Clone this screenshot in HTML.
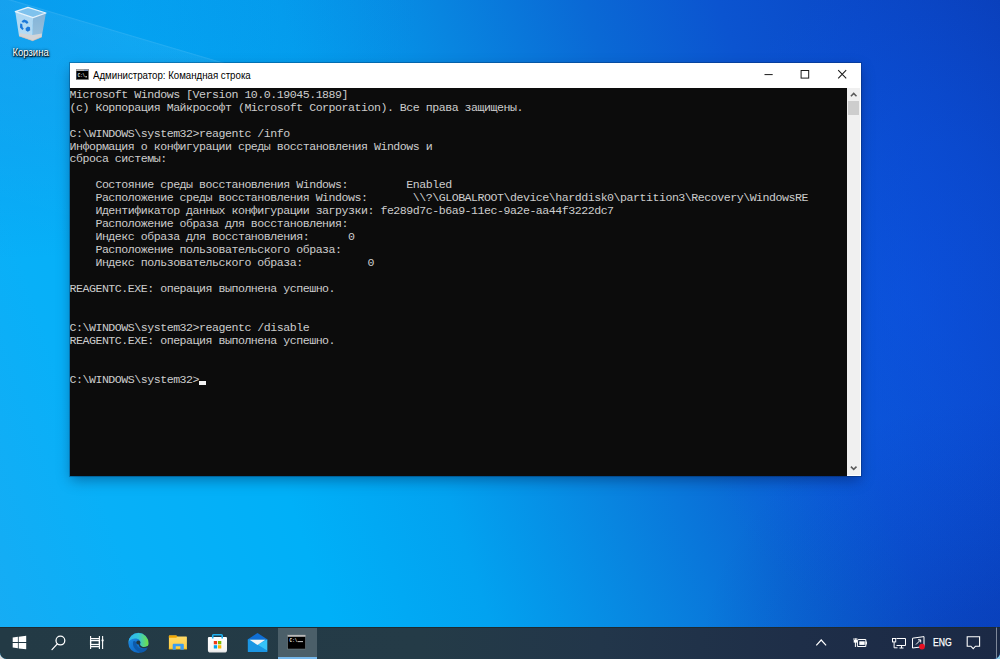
<!DOCTYPE html>
<html lang="ru">
<head>
<meta charset="utf-8">
<title>Администратор: Командная строка</title>
<style>
*{box-sizing:border-box;margin:0;padding:0}
html,body{width:1000px;height:659px;overflow:hidden;background:linear-gradient(to right,#dedede 0,#dedede 50%,#8fd0e6 50%,#8fd0e6 100%)}
body{position:relative;font-family:"Liberation Sans",sans-serif}
#desk{position:absolute;left:0;top:0;width:1000px;height:659px;overflow:hidden;border-radius:0 0 6.5px 6.5px;
 background:
  linear-gradient(71deg,#17acf4 0%,#08b0f8 13%,#00b0f8 28%,#02a2f0 41%,#0885e0 54%,#0a69d5 66%,#0b54d0 77%,#0a49c8 88%,#0a40bc 100%);}
#desk .v1{position:absolute;left:0;top:0;width:1000px;height:659px;
 background:
  radial-gradient(ellipse 420px 260px at 0 0,rgba(20,110,215,.30) 0%,rgba(20,110,215,.16) 55%,rgba(20,110,215,0) 100%),
  radial-gradient(ellipse 230px 330px at 905px 300px,rgba(12,86,240,.42) 0%,rgba(12,86,240,.25) 50%,rgba(12,86,240,0) 100%),
  radial-gradient(ellipse 300px 260px at 1000px 659px,rgba(5,30,150,.32) 0%,rgba(5,30,150,0) 100%)}
#beam{position:absolute;left:-30px;top:-13.3px;width:460px;height:220px;transform-origin:0 0;transform:rotate(16.5deg);
 background:linear-gradient(to bottom,rgba(255,255,255,0) 0,rgba(255,255,255,.12) 1px,rgba(255,255,255,.05) 2.2px,rgba(255,255,255,.03) 70px,rgba(255,255,255,0) 220px)}
/* desktop icon */
#bin{position:absolute;left:10px;top:4px;width:42px;height:40px}
#binlbl{position:absolute;left:1px;top:46px;width:60px;text-align:center;color:#fff;font-size:10.3px;line-height:13px;
 text-shadow:0 1px 2px rgba(0,0,0,.9),0 0 3px rgba(0,0,0,.7),1px 1px 1px rgba(0,0,0,.8)}
#binlbl span{display:inline-block;transform:scaleX(.92);transform-origin:50% 50%}
/* window */
#win{position:absolute;left:69.5px;top:63px;width:791.5px;height:412.5px;background:#fff;
 box-shadow:0 0 0 1px rgba(0,30,70,.30),0 5px 13px -1px rgba(0,0,40,.36)}
#tb{position:absolute;left:0;top:0;width:791.5px;height:24.5px;background:#fff}
#ticon{position:absolute;left:7.5px;top:7px;width:12px;height:10px}
#ttl{position:absolute;left:23.5px;top:4.1px;font-size:10.8px;line-height:16px;color:#000;white-space:nowrap;transform:scaleX(.896);transform-origin:0 50%}
.wb{position:absolute;top:0;height:24px;width:37px}
#con{position:absolute;left:0;top:24.5px;width:777.5px;height:388px;background:#0c0c0c;overflow:hidden}
#con pre{position:absolute;left:0px;top:1.2px;font-family:"Liberation Mono",monospace;font-size:11.6px;line-height:12.95px;letter-spacing:-0.48px;color:#cccccc;white-space:pre}
#cur{position:absolute;left:129.5px;top:293.9px;width:7px;height:3.3px;background:#f2f2f2}
#sb{position:absolute;left:777.5px;top:24.5px;width:14px;height:388px;background:#f0f0f0;border-right:1.8px solid #fff;border-bottom:.8px solid #fff}
#thumb{position:absolute;left:1px;top:13.5px;width:11px;height:13.5px;background:#cdcdcd}
/* taskbar */
#task{position:absolute;left:0;top:627px;width:1000px;height:32px;
 background:linear-gradient(to right,#233a45 0%,#243b47 42%,#22364a 60%,#1e2e48 80%,#1b2945 100%);
 border-top:1px solid #1d2a30}
#active{position:absolute;left:278px;top:0;width:38.5px;height:31px;background:#4b5f69}
#active i{position:absolute;left:0;bottom:0;width:100%;height:2px;background:#76b9ed}
#eng{position:absolute;left:933px;top:8px;font-size:10.4px;line-height:14px;color:#fff;-webkit-text-stroke:.25px #fff;transform:scaleX(.83);transform-origin:0 50%}
svg{position:absolute;overflow:visible}
</style>
</head>
<body>
<div id="desk">
 <div class="v1"></div>
 <div id="beam"></div>
<svg id="binsvg" style="left:0;top:0" width="62" height="46" viewBox="0 0 62 46">
  <defs>
   <linearGradient id="bl" x1="0" y1="0" x2="0" y2="1"><stop offset="0" stop-color="#a9d6f4"/><stop offset="1" stop-color="#b9dcf2"/></linearGradient>
   <linearGradient id="br" x1="0" y1="0" x2="0" y2="1"><stop offset="0" stop-color="#82b3d8"/><stop offset="1" stop-color="#9cc2dc"/></linearGradient>
  </defs>
  <polygon points="15.3,11.7 28,7.3 45.9,13 33,17.7" fill="#7fc2ed"/>
  <polygon points="15.3,11.7 33,17.7 32.7,40.7 19,36" fill="url(#bl)"/>
  <polygon points="33,17.7 45.9,13 41.7,37 32.7,40.7" fill="url(#br)"/>
  <polygon points="19,36 20.2,33.2 32.8,35 41.9,33.6 41.7,37 32.7,40.7" fill="#d1d5d9"/>
  <polyline points="19,36 32.7,40.7 41.7,37" fill="none" stroke="#dcb69c" stroke-width="0.55"/>
  <polygon points="15.3,11.7 28,7.3 45.9,13 33,17.7" fill="none" stroke="#e6f3fc" stroke-width="1.3" stroke-linejoin="round"/>
  <g fill="#1b78da">
   <path d="M21.5 21.2 l2.6 -1.6 3.2 1.2 1.2 2.2 -2 .8 -1.6 -1.6 -2 .6z"/>
   <path d="M20.2 23.4 l2 .6 .4 3.2 1.2 1.6 -1.4 1.2 -2.4 -2.6z"/>
   <path d="M25.6 28.2 l2.2 -1.6 2.2 .6 .2 3 -2.4 1.6 -2 -1.2z"/>
  </g>
 </svg>
 <div id="binlbl"><span>Корзина</span></div>

 <div id="win">
  <div id="tb">
   <svg style="left:6.8px;top:6.3px" width="12.6" height="10.6" viewBox="0 0 12.6 10.6">
    <rect x="0" y="0" width="12.6" height="10.6" fill="#000"/>
    <rect x="0" y="0" width="12.6" height="2" fill="#b4b4b4"/>
    <rect x="8" y=".6" width="4" height=".9" fill="#4a76c8"/>
    <rect x=".25" y=".25" width="12.1" height="10.1" fill="none" stroke="#8c8c8c" stroke-width=".5"/>
    <text x="1.7" y="8" font-family="Liberation Mono, monospace" font-size="5.4" font-weight="700" fill="#e6e6e6" textLength="7.4" lengthAdjust="spacingAndGlyphs">C:\</text>
    <rect x="9.4" y="7.2" width="1.5" height="1.2" fill="#e6e6e6"/>
   </svg>
   <svg style="left:-0.5px;top:0" width="792" height="24" viewBox="0 0 792 24">
    <path d="M695.5 11.6 H703.7" stroke="#1a1a1a" stroke-width="1"/>
    <rect x="732.1" y="7.5" width="7.6" height="7.6" fill="none" stroke="#1a1a1a" stroke-width="1"/>
    <path d="M769.2 7.2 L777.2 15.3 M777.2 7.2 L769.2 15.3" stroke="#1a1a1a" stroke-width="1.05"/>
   </svg>
   <div id="ttl">Администратор: Командная строка</div>
  </div>
  <div id="con"><pre>Microsoft Windows [Version 10.0.19045.1889]
(c) Корпорация Майкрософт (Microsoft Corporation). Все права защищены.

C:\WINDOWS\system32&gt;reagentc /info
Информация о конфигурации среды восстановления Windows и
сброса системы:

    Состояние среды восстановления Windows:         Enabled
    Расположение среды восстановления Windows:       \\?\GLOBALROOT\device\harddisk0\partition3\Recovery\WindowsRE
    Идентификатор данных конфигурации загрузки: fe289d7c-b6a9-11ec-9a2e-aa44f3222dc7
    Расположение образа для восстановления:
    Индекс образа для восстановления:      0
    Расположение пользовательского образа:
    Индекс пользовательского образа:          0

REAGENTC.EXE: операция выполнена успешно.


C:\WINDOWS\system32&gt;reagentc /disable
REAGENTC.EXE: операция выполнена успешно.


C:\WINDOWS\system32&gt;</pre><div id="cur"></div></div>
  <div id="sb"><div id="thumb"></div>
   <svg style="left:0;top:0" width="14" height="388" viewBox="0 0 14 388">
    <path d="M3.9 8.2 L6.7 5.4 L9.5 8.2" fill="none" stroke="#5a5a5a" stroke-width="1.5"/>
    <path d="M3.9 378.6 L6.7 381.4 L9.5 378.6" fill="none" stroke="#5a5a5a" stroke-width="1.5"/>
   </svg></div>
 </div>

 <div id="task">
  <div id="active"><i></i></div>
  <div id="eng">ENG</div>
 </div>
 <svg id="tbicons" style="left:0;top:0" width="1000" height="659" viewBox="0 0 1000 659">
  <defs>
   <linearGradient id="eb" x1="0" y1="0" x2="1" y2="1"><stop offset="0" stop-color="#2193e6"/><stop offset=".55" stop-color="#1272cf"/><stop offset="1" stop-color="#0c56a6"/></linearGradient>
   <linearGradient id="eg" x1="0" y1="0" x2="1" y2="0"><stop offset="0" stop-color="#2fb5ef"/><stop offset=".5" stop-color="#35c6d8"/><stop offset="1" stop-color="#72e23f"/></linearGradient>
   <linearGradient id="fy" x1="0" y1="0" x2="0" y2="1"><stop offset="0" stop-color="#ffdb6a"/><stop offset="1" stop-color="#ffcd42"/></linearGradient>
   <linearGradient id="bag" x1="0" y1="0" x2="0" y2="1"><stop offset="0" stop-color="#ffffff"/><stop offset=".8" stop-color="#f6f6f6"/><stop offset="1" stop-color="#e2e2e2"/></linearGradient>
  </defs>
  <!-- start -->
  <g fill="#fff">
   <polygon points="12.7,637.5 17.9,636.8 17.9,642 12.7,642"/>
   <polygon points="18.7,636.7 26.2,635.7 26.2,642 18.7,642"/>
   <polygon points="12.7,642.9 17.9,642.9 17.9,648.3 12.7,647.6"/>
   <polygon points="18.7,642.9 26.2,642.9 26.2,649.3 18.7,648.4"/>
  </g>
  <!-- search -->
  <g fill="none" stroke="#fff" stroke-width="1.25">
   <circle cx="60.4" cy="640.6" r="4.4"/>
   <path d="M52 649.6 L57.3 643.9" stroke-linecap="round"/>
  </g>
  <!-- task view -->
  <g fill="none" stroke="#fff" stroke-width="1.1">
   <path d="M90.6 636 V649 M99.4 636 V649 M90.6 638.6 H99.4 M90.6 646.6 H99.4"/>
   <rect x="90.6" y="640.6" width="8.8" height="3.9" stroke-width="1.3"/>
   <path d="M102.6 636 V649"/>
   <circle cx="102.6" cy="640.4" r="1.1" fill="#fff" stroke="none"/>
  </g>
  <!-- edge -->
  <g transform="translate(138.4 642.9)">
   <circle r="10.1" fill="url(#eb)"/>
   <path d="M-5.2 -1.5 C-6.5 3 -3 8.6 3.2 9.6 C6 9 8 7.5 9.2 5 C4 7.5 -1.5 5 -2 0.5 C-2.3 -1.5 -3.5 -2.5 -5.2 -1.5Z" fill="#0d5aaa"/>
   <path d="M-10.1 0 A10.1 10.1 0 0 1 10.1 0.6 C10.1 4.2 6 4.9 3.4 4.1 C1.4 3.4 1.4 1.4 2.1 0.4 C2.6 -2.2 0 -4.6 -3.6 -4.3 C-7.2 -3.9 -9.7 -2 -10.1 0Z" fill="url(#eg)"/>
   <circle cx="-0.1" cy="-0.3" r="2" fill="#21363f"/>
   <path d="M0.8 1.2 C1.2 4.4 5.2 5.9 9.6 3.6" stroke="#21363f" stroke-width="1.3" fill="none"/>
  </g>
  <!-- explorer -->
  <g>
   <path d="M168.9 636 a.6 .6 0 0 1 .6 -.6 H176.3 L177.4 636.6 H186.3 a.6 .6 0 0 1 .6 .6 V649.2 H168.9Z" fill="url(#fy)"/>
   <path d="M168.9 637.7 V636 a.6 .6 0 0 1 .6 -.6 H176.3 L177.4 636.6 L176.3 637.7Z" fill="#f0a500"/>
   <rect x="168.9" y="648" width="18" height="1.2" fill="#ffc31f"/>
   <path d="M172.7 649.8 V644.7 a1 1 0 0 1 1 -1 H182.8 a1 1 0 0 1 1 1 V649.8 H180.4 V646.2 H175.7 V649.8Z" fill="#3a9df2"/>
  </g>
  <!-- store -->
  <g>
   <path d="M212.7 638.6 V635.6 a.8 .8 0 0 1 .8 -.8 H221.4 a.8 .8 0 0 1 .8 .8 V638.6" fill="none" stroke="#1fb1f1" stroke-width="1.6"/>
   <path d="M207.9 638 a1.1 1.1 0 0 1 1.1 -1.1 H225.9 a1.1 1.1 0 0 1 1.1 1.1 V650 a2.6 2.6 0 0 1 -2.6 2.6 H210.5 a2.6 2.6 0 0 1 -2.6 -2.6Z" fill="url(#bag)"/>
   <path d="M212.7 636.9 V638.4 M222.2 636.9 V638.4" stroke="#1fb1f1" stroke-width="1.6"/>
   <rect x="213.8" y="641" width="3.3" height="3.3" fill="#f03a17"/>
   <rect x="218" y="641" width="3.3" height="3.3" fill="#7fba00"/>
   <rect x="213.8" y="645.2" width="3.3" height="3.3" fill="#00a4ef"/>
   <rect x="218" y="645.2" width="3.3" height="3.3" fill="#ffb900"/>
  </g>
  <!-- mail -->
  <g>
   <polygon points="247.9,639.2 257.5,633 267.2,639.2 267.2,640.5 247.9,640.5" fill="#0f6fd6"/>
   <polygon points="247.9,639.2 267.2,639.2 267.2,640 247.9,640" fill="#0a4cae"/>
   <rect x="247.9" y="639.4" width="19.3" height="12.5" fill="#1d9be7"/>
   <polygon points="257.5,645 267.2,639.4 267.2,651" fill="#36c3f7"/>
   <polygon points="247.9,639.4 249.2,639.4 267.2,650.6 267.2,651.9 247.9,651.9" fill="#1b96e3"/>
   <polygon points="249.6,639.8 265.4,639.8 257.5,645" fill="#f4f4f4"/>
  </g>
  <!-- cmd -->
  <g>
   <rect x="287.7" y="635" width="17.8" height="14" fill="#000" stroke="#7f8a8f" stroke-width=".5"/>
   <rect x="287.7" y="635" width="17.8" height="1.8" fill="#b9b9b9"/>
   <text x="289.6" y="642.3" font-family="Liberation Mono, monospace" font-size="5.2" font-weight="700" fill="#eee" textLength="7.6" lengthAdjust="spacingAndGlyphs">C:\</text>
   <rect x="297.6" y="641.2" width="5.4" height=".9" fill="#ddd"/>
  </g>
  <!-- tray chevron -->
  <path d="M816.3 645.4 L821.2 640 L826.1 645.4" fill="none" stroke="#fff" stroke-width="1.2"/>
  <!-- battery -->
  <g fill="none" stroke="#fff" stroke-width="1">
   <path d="M858.2 639.5 H865.8 V646.5 H857.4 V641 Z"/>
   <rect x="859.3" y="641.3" width="5.4" height="3.6" fill="#fff" stroke="none"/>
   <path d="M866.3 641.5 V644.5" stroke-width="1.2"/>
   <path d="M855.4 638.2 V647 M854 638.2 V640 M856.8 638.2 V640"/>
   <rect x="853.7" y="640" width="3.4" height="2.6" fill="#fff" stroke="none"/>
  </g>
  <!-- network -->
  <g fill="none" stroke="#fff" stroke-width="1">
   <path d="M896.5 638.5 H905.5 V645.5 H896.5"/>
   <path d="M899.5 648 H903.5 M901.5 645.5 V648"/>
   <rect x="892.5" y="638.5" width="3.2" height="3.4"/>
   <path d="M894.1 642 V647.8 H897.5"/>
  </g>
  <!-- display/recording -->
  <g fill="none" stroke="#fff" stroke-width="1">
   <path d="M912.5 638.2 L924 636.6 V646.6 L912.5 648 Z"/>
   <path d="M916 644.5 L920.5 640 M918 639.8 H920.7 V642.4"/>
   <circle cx="922" cy="646.6" r="2.9" fill="#e81123" stroke="none"/>
  </g>
  <!-- action center -->
  <path d="M967.2 636.8 H979.6 V646.2 H975.5 L973.2 648.6 L970.9 646.2 H967.2 Z" fill="none" stroke="#fff" stroke-width="1.1"/>
  <!-- show desktop -->
  <rect x="996" y="627.5" width="1" height="31.5" fill="#97a0ae" opacity=".8"/>
 </svg>
</div>
</body>
</html>
